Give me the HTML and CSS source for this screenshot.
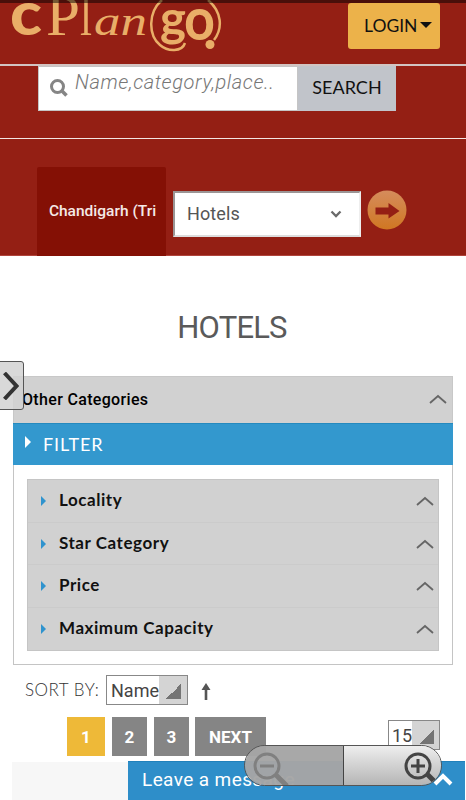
FILE: index.html
```html
<!DOCTYPE html>
<html lang="en">
<head>
    <meta charset="UTF-8">
    <meta name="viewport" content="width=device-width, initial-scale=1.0">
    <title>cPlango - Hotels</title>
    <link rel="stylesheet" href="styles.css">
</head>
<body>
    <header class="header">
        <div class="topbar">
            <svg class="logo" width="225" height="60" viewBox="0 0 225 60">
                <g fill="#e9ae68">
                    <text class="logo-c" x="10" y="35" textLength="32" lengthAdjust="spacingAndGlyphs">c</text>
                    <text class="logo-p" x="46" y="35" textLength="34" lengthAdjust="spacingAndGlyphs">P</text>
                    <text class="logo-l" x="80" y="35" textLength="12" lengthAdjust="spacingAndGlyphs">l</text>
                    <text class="logo-an" x="94" y="35" textLength="53" lengthAdjust="spacingAndGlyphs">an</text>
                    <text class="logo-g" x="160" y="36" textLength="26" lengthAdjust="spacingAndGlyphs">g</text>
                    <text class="logo-o" x="184" y="40" textLength="31" lengthAdjust="spacingAndGlyphs">o</text>
                    <circle cx="210" cy="44.500" r="4.500"/>
                </g>
                <path d="M162 0 C148 12 148 35 160 45 C168 52 182 52 185 43 M208 0 C222 12 223 28 214 40" fill="none" stroke="#e9ae68" stroke-width="2.500"/>
            </svg>
            <button class="login">LOGIN <span class="caret"></span></button>
        </div>
        <form class="search">
            <div class="search-field">
                <svg width="20" height="20" viewBox="0 0 20 20" fill="none" stroke="#858585">
                    <circle cx="8.500" cy="8.500" r="6" stroke-width="3"/>
                    <path d="M13 13l4.500 4.500" stroke-width="3.500"/>
                </svg>
                <span class="placeholder">Name,category,place..</span>
            </div>
            <button type="button" class="search-btn">SEARCH</button>
        </form>
        <div class="location">
            <div class="city">Chandigarh (Tri</div>
            <div class="category">
                <span>Hotels</span>
                <svg width="12" height="8" viewBox="0 0 12 8"><path d="M1.500 1.500L6 6l4.500-4.500" fill="none" stroke="#6a6a6a" stroke-width="2.300"/></svg>
            </div>
            <svg class="go" width="40" height="40" viewBox="0 0 40 40">
                <defs>
                    <linearGradient id="orange" x1="0" y1="0" x2="0" y2="1">
                        <stop offset="0" stop-color="#d58c5c"/>
                        <stop offset="1" stop-color="#d07722"/>
                    </linearGradient>
                </defs>
                <circle cx="20" cy="20" r="19.500" fill="url(#orange)"/>
                <path d="M8.500 17.500h13v-4.500l11 8-11 7.500v-4h-13z" fill="#941f14"/>
            </svg>
        </div>
    </header>

    <h1>HOTELS</h1>

    <main>
        <div class="other">
            <span>Other Categories</span>
            <svg class="up" width="18" height="10" viewBox="0 0 18 10"><path d="M1 9l8-7 8 7"/></svg>
        </div>
        <div class="filter-title"><span class="arrow white"></span><span>FILTER</span></div>
        <div class="filter-body">
            <ul class="filters">
                <li><span class="arrow"></span><span class="name">Locality</span><svg class="up" width="18" height="10" viewBox="0 0 18 10"><path d="M1 9l8-7 8 7"/></svg></li>
                <li><span class="arrow"></span><span class="name">Star Category</span><svg class="up" width="18" height="10" viewBox="0 0 18 10"><path d="M1 9l8-7 8 7"/></svg></li>
                <li><span class="arrow"></span><span class="name">Price</span><svg class="up" width="18" height="10" viewBox="0 0 18 10"><path d="M1 9l8-7 8 7"/></svg></li>
                <li><span class="arrow"></span><span class="name">Maximum Capacity</span><svg class="up" width="18" height="10" viewBox="0 0 18 10"><path d="M1 9l8-7 8 7"/></svg></li>
            </ul>
        </div>

        <div class="sort">
            <span class="sort-label">SORT BY:</span>
            <div class="select select-name"><span>Name</span><i></i></div>
            <svg width="10" height="17" viewBox="0 0 10 17" fill="#555"><path d="M5 0l4.500 7H6.300v10H3.700V7H.5z"/></svg>
        </div>

        <div class="pages">
            <a class="page active">1</a>
            <a class="page">2</a>
            <a class="page">3</a>
            <a class="page next">NEXT</a>
            <div class="select select-count"><span>15</span><i></i></div>
        </div>
    </main>

    <div class="bottom">
        <div class="bottom-blank"></div>
        <div class="chat">
            <span>Leave a message</span>
            <svg width="20" height="13" viewBox="0 0 20 13"><path d="M2 11l8-8 8 8" fill="none" stroke="#fff" stroke-width="4"/></svg>
        </div>
    </div>

    <!-- side menu handle -->
    <div class="handle">
        <svg width="16" height="28" viewBox="0 0 16 28"><path d="M1.500 1l12 13-12 13" fill="none" stroke="#333" stroke-width="4"/></svg>
    </div>

    <!-- zoom buttons -->
    <div class="zoom">
        <div class="zoom-out">
            <svg width="42" height="36" viewBox="0 0 42 36" fill="none" stroke="#808080">
                <circle cx="15" cy="16" r="12" stroke-width="3"/>
                <path d="M8 16h14" stroke-width="3"/>
                <path d="M24 25l11 11" stroke-width="5"/>
            </svg>
        </div>
        <div class="zoom-in">
            <svg width="36" height="36" viewBox="0 0 36 36" fill="none" stroke="#444">
                <circle cx="15" cy="16" r="12" stroke-width="3"/>
                <path d="M8 16h14M15 9v14" stroke-width="3"/>
                <path d="M24 24l9 9" stroke-width="5"/>
            </svg>
        </div>
    </div>
</body>
</html>
```

FILE: styles.css
```css
* {
    box-sizing: border-box;
}

body {
    margin: 0;
    height: 800px;
    overflow: hidden;
    position: relative;
    background-color: #fff;
    font-family: Roboto, sans-serif;
}

/* shadow along the top edge */
body::before {
    content: "";
    position: absolute;
    top: 0;
    left: 0;
    right: 0;
    height: 3px;
    background-color: rgba(0, 0, 0, 0.5);
}

button {
    border: none;
    padding: 0;
    font-family: Lato, sans-serif;
    color: #111;
}

.header {
    background-color: #941f14;
    height: 256px;
    border-bottom: 1px solid #b0443b;
}

.topbar {
    height: 66px;
    border-bottom: 2px solid #d2c4c2;
    display: flex;
    justify-content: space-between;
    padding-right: 26px;
}

.logo-c {
    font: 900 60px "Lato", sans-serif;
}

.logo-p {
    font: 58px "Liberation Serif", serif;
}

.logo-l {
    font: 54px "Liberation Serif", serif;
}

.logo-an {
    font: italic 42px "Liberation Serif", serif;
}

.logo-g {
    font: bold 50px "Lato", sans-serif;
}

.logo-o {
    font: bold 60px "Lato", sans-serif;
}

.login {
    width: 92px;
    height: 46px;
    margin-top: 3px;
    background-color: #ecb24a;
    border-radius: 3px;
    font-size: 17.500px;
    display: flex;
    align-items: center;
    padding: 0 0 2px 16px;
}

.caret {
    border: 6px solid transparent;
    border-top-color: #111;
    border-bottom: none;
    margin-left: 3px;
}

.search {
    display: flex;
    height: 73px;
    padding-left: 38px;
    border-bottom: 1px solid #f3e5e3;
}

.search-field {
    width: 260px;
    height: 45px;
    background-color: #fff;
    border: 1px solid #c5c5c5;
    display: flex;
    padding: 11px 0 0 10px;
}

.placeholder {
    font: italic 300 20px/24px Roboto, sans-serif;
    letter-spacing: 0.6px;
    color: #777;
    margin: -8px 0 0 6px;
    white-space: nowrap;
}

.search-btn {
    width: 98px;
    height: 45px;
    background-color: #c1c4ca;
    font-size: 18px;
    padding-bottom: 3px;
}

.location {
    display: flex;
    height: 116px;
    padding-left: 37px;
}

.city {
    width: 129px;
    height: 89px;
    margin-top: 28px;
    border-radius: 2px 2px 0 0;
    background-color: #841005;
    color: #f5e9e7;
    font-size: 15.500px;
    font-weight: 500;
    line-height: 88px;
    text-align: center;
    padding-left: 2px;
    white-space: nowrap;
}

.category {
    width: 188px;
    height: 46px;
    margin: 52px 6px 0 7px;
    background-color: #fff;
    border: 2px solid #9b9595;
    border-right-color: #eee;
    border-bottom-color: #ddd;
    display: flex;
    align-items: center;
    justify-content: space-between;
    padding: 0 17px 1px 12px;
    font-size: 18px;
    letter-spacing: 0.1px;
    color: #555;
}

.go {
    margin-top: 51px;
}

h1 {
    margin: 54px 0 30px;
    font-size: 31px;
    line-height: 36px;
    font-weight: 400;
    letter-spacing: -0.8px;
    color: #5a5a5a;
    text-align: center;
    text-indent: -2px;
}

main {
    margin: 0 13px;
}

.up path {
    fill: none;
    stroke: #666;
    stroke-width: 1.8;
}

.other {
    height: 47px;
    background-color: #d1d1d1;
    border: 1px solid #c8c8c8;
    border-bottom: none;
    display: flex;
    align-items: center;
    justify-content: space-between;
    padding: 0 5px 2px 8px;
    font-size: 16px;
    font-weight: 500;
    letter-spacing: 0.33px;
    color: #000;
}

.filter-title {
    height: 42px;
    background-color: #3398ce;
    border-top: 1px solid #258abf;
    color: #fff;
    display: flex;
    align-items: center;
    padding: 0 0 2px 12px;
    font: 18px Lato, sans-serif;
    letter-spacing: 0.9px;
}

.arrow {
    border: 5px solid transparent;
    border-left-color: #2f93ce;
    border-right: none;
}

.arrow.white {
    border-width: 6px;
    border-right: none;
    border-left-color: #fff;
    margin: -3px 12px 0 0;
}

.filter-body {
    border: 1px solid #c4c4c4;
    border-top: none;
    height: 200px;
    padding: 14px 13px;
}

.filters {
    list-style: none;
    margin: 0;
    padding: 0;
    background-color: #d1d1d1;
    border: 1px solid #c5c5c5;
}

.filters li {
    height: 42.500px;
    display: flex;
    align-items: center;
    padding: 1px 4px 0 13px;
    border-bottom: 1px solid #cbcbcb;
}

.filters li:last-child {
    border-bottom: none;
}

.name {
    flex: 1;
    margin: -3px 0 0 13px;
    font: bold 17px Lato, sans-serif;
    letter-spacing: 0.55px;
    color: #111;
}

.sort {
    height: 52px;
    padding: 10px 0 0 12px;
    display: flex;
}

.sort-label {
    width: 81px;
    font: 300 17px/30px Lato, sans-serif;
    letter-spacing: 0.5px;
    color: #333;
}

.sort svg {
    margin: 8px 0 0 13px;
}

.select {
    display: flex;
    background-color: #fff;
    border: 1px solid #888;
    color: #444;
    font-size: 18px;
}

.select i {
    margin-left: auto;
    width: 28px;
    background: linear-gradient(135deg, transparent 50%, #747474 50%) 7px 60%/15px 15px no-repeat #d4d4d4;
}

.select-name {
    width: 82px;
    height: 30px;
    padding-left: 4px;
    line-height: 29px;
}

.pages {
    display: flex;
    padding-left: 54px;
}

.page {
    width: 35px;
    height: 39px;
    margin-right: 7px;
    background-color: #858585;
    color: #fff;
    font-size: 17px;
    font-weight: bold;
    line-height: 40px;
    text-align: center;
}

.page.active {
    width: 38px;
    background-color: #eeb938;
}

.page.next {
    width: 71px;
    margin-left: -1px;
}

.select-count {
    width: 52px;
    height: 30px;
    margin: 3px 13px 0 auto;
    padding-left: 3px;
    line-height: 29px;
}

.bottom {
    position: absolute;
    left: 12px;
    right: 1px;
    bottom: 0;
    height: 39px;
    display: flex;
}

.bottom-blank {
    width: 116px;
    margin-top: 1px;
    background-color: #f7f7f7;
}

.chat {
    flex: 1;
    background-color: #2e8ec9;
    border-top: 1px solid #2181bb;
    color: #fff;
    display: flex;
    justify-content: space-between;
    padding: 5px 12px 0 14px;
    font-size: 19px;
    line-height: 26px;
    letter-spacing: 0.4px;
}

.chat svg {
    margin-top: 6px;
}

.handle {
    position: absolute;
    left: -3px;
    top: 361px;
    width: 27px;
    height: 49px;
    border: 1px solid #555;
    border-radius: 3px;
    background-color: rgba(210, 210, 210, 0.85);
    padding: 10px 0 0 5px;
}

.zoom {
    position: absolute;
    left: 244px;
    top: 745px;
    width: 198px;
    height: 41px;
    display: flex;
    border: 1px solid #555;
    border-radius: 21px;
    overflow: hidden;
}

.zoom-out {
    width: 99px;
    padding: 4px 0 0 7px;
    border-right: 1px solid #444;
    background-color: rgba(165, 165, 165, 0.97);
}

.zoom-in {
    flex: 1;
    padding: 4px 0 0 59px;
    background: linear-gradient(#eee, #b5b5b5);
}
```
